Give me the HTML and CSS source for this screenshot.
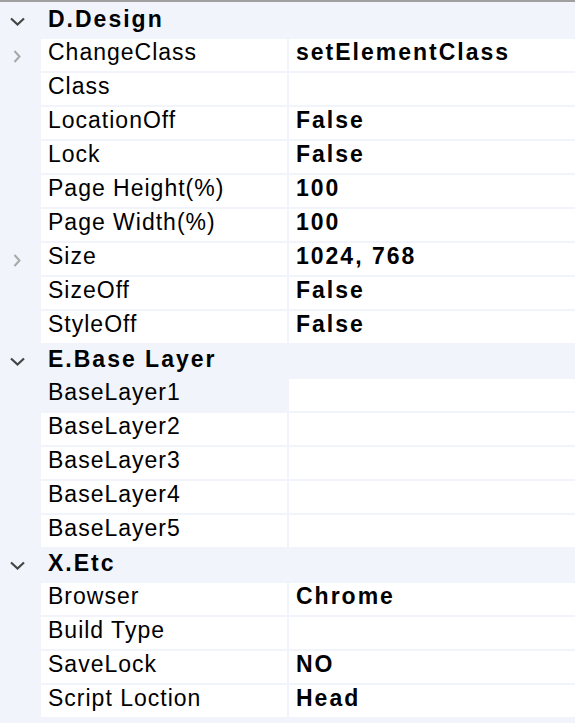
FILE: index.html
```html
<!DOCTYPE html>
<html>
<head>
<meta charset="utf-8">
<link rel="stylesheet" href="styles.css">
</head>
<body>
<div class="grid">
  <div class="cat">
    <span class="gutter"><svg class="down" width="15" height="9" viewBox="0 0 15 9"><polyline points="1,1.5 7.5,7.5 14,1.5"/></svg></span>
    <span class="cat-name">D.Design</span>
  </div>
  <div class="prop">
    <span class="gutter"><svg class="right" width="8" height="13" viewBox="0 0 8 13"><polyline points="1.5,1 6.5,6.5 1.5,12"/></svg></span>
    <span class="name">ChangeClass</span><span class="value">setElementClass</span>
  </div>
  <div class="prop"><span class="gutter"></span><span class="name">Class</span><span class="value"></span></div>
  <div class="prop"><span class="gutter"></span><span class="name">LocationOff</span><span class="value">False</span></div>
  <div class="prop"><span class="gutter"></span><span class="name">Lock</span><span class="value">False</span></div>
  <div class="prop"><span class="gutter"></span><span class="name">Page Height(%)</span><span class="value">100</span></div>
  <div class="prop"><span class="gutter"></span><span class="name">Page Width(%)</span><span class="value">100</span></div>
  <div class="prop">
    <span class="gutter"><svg class="right" width="8" height="13" viewBox="0 0 8 13"><polyline points="1.5,1 6.5,6.5 1.5,12"/></svg></span>
    <span class="name">Size</span><span class="value">1024, 768</span>
  </div>
  <div class="prop"><span class="gutter"></span><span class="name">SizeOff</span><span class="value">False</span></div>
  <div class="prop"><span class="gutter"></span><span class="name">StyleOff</span><span class="value">False</span></div>

  <div class="cat">
    <span class="gutter"><svg class="down" width="15" height="9" viewBox="0 0 15 9"><polyline points="1,1.5 7.5,7.5 14,1.5"/></svg></span>
    <span class="cat-name">E.Base Layer</span>
  </div>
  <div class="prop selected"><span class="gutter"></span><span class="name">BaseLayer1</span><span class="value"></span></div>
  <div class="prop"><span class="gutter"></span><span class="name">BaseLayer2</span><span class="value"></span></div>
  <div class="prop"><span class="gutter"></span><span class="name">BaseLayer3</span><span class="value"></span></div>
  <div class="prop"><span class="gutter"></span><span class="name">BaseLayer4</span><span class="value"></span></div>
  <div class="prop"><span class="gutter"></span><span class="name">BaseLayer5</span><span class="value"></span></div>

  <div class="cat">
    <span class="gutter"><svg class="down" width="15" height="9" viewBox="0 0 15 9"><polyline points="1,1.5 7.5,7.5 14,1.5"/></svg></span>
    <span class="cat-name">X.Etc</span>
  </div>
  <div class="prop"><span class="gutter"></span><span class="name">Browser</span><span class="value">Chrome</span></div>
  <div class="prop"><span class="gutter"></span><span class="name">Build Type</span><span class="value"></span></div>
  <div class="prop"><span class="gutter"></span><span class="name">SaveLock</span><span class="value">NO</span></div>
  <div class="prop"><span class="gutter"></span><span class="name">Script Loction</span><span class="value">Head</span></div>
</div>
</body>
</html>
```
FILE: styles.css
```css
html, body {
  margin: 0;
  padding: 0;
  background: #f1f5fb;
}
body {
  font-family: "Liberation Sans", Arial, sans-serif;
  font-size: 23px;
  color: #000;
  width: 575px;
  height: 723px;
  overflow: hidden;
}
.grid {
  border-top: 2px solid #a0a0a0;
  padding-top: 1px;
  background: #f1f5fb;
}
.cat, .prop {
  display: grid;
  grid-template-columns: 41px 246px 1fr;
  height: 32px;
  margin-top: 2px;
}
.gutter {
  display: flex;
  align-items: center;
  justify-content: flex-start;
}
.cat .gutter {
  padding-left: 10px;
  padding-top: 1px;
}
.prop .gutter {
  padding-left: 13px;
  padding-top: 3px;
}
.down polyline {
  fill: none;
  stroke: #454545;
  stroke-width: 2.2;
}
.right polyline {
  fill: none;
  stroke: #a8a8a8;
  stroke-width: 2;
}
.cat-name {
  grid-column: 2 / 4;
  font-weight: bold;
  letter-spacing: 2px;
  line-height: 26px;
  padding-left: 7px;
  padding-top: 1px;
  white-space: nowrap;
}
.name {
  background: #fff;
  line-height: 26px;
  padding-left: 7px;
  letter-spacing: 1px;
  white-space: nowrap;
  overflow: hidden;
}
.value {
  background: #fff;
  margin-left: 2px;
  line-height: 26px;
  padding-left: 7px;
  font-weight: bold;
  letter-spacing: 2px;
  white-space: nowrap;
}
.selected .name {
  background: #f1f5fb;
}
```
